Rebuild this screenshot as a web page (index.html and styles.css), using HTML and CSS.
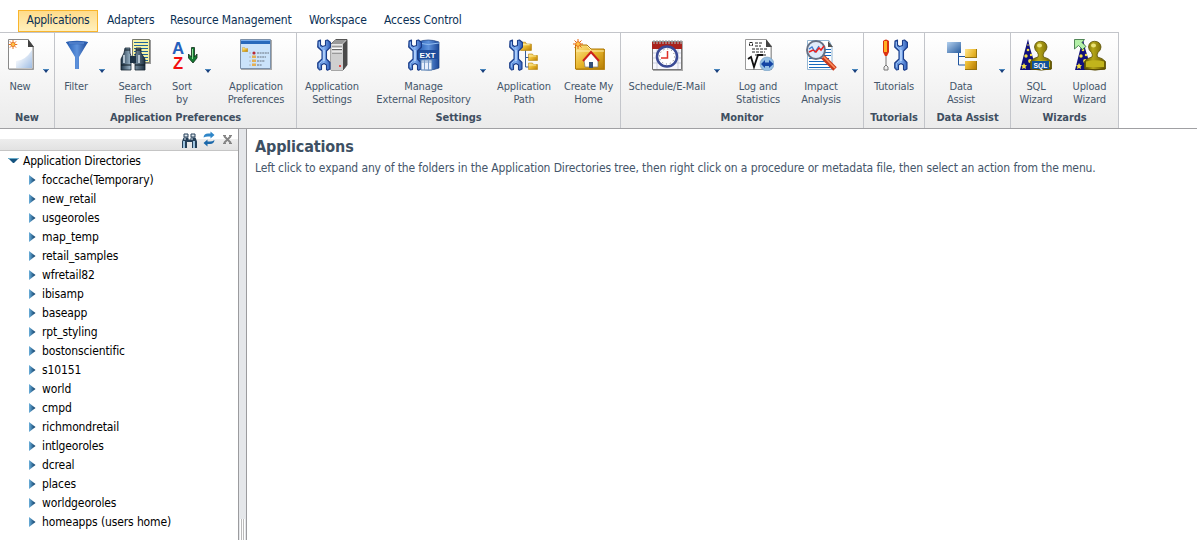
FILE: index.html
```html
<!DOCTYPE html>
<html lang="en">
<head>
<meta charset="utf-8">
<title>Applications</title>
<link rel="stylesheet" href="styles.css">
</head>
<body>
<svg class="defs" width="0" height="0">
  <defs>
    <linearGradient id="steel" x1="0" x2="1"><stop offset="0" stop-color="#3263b8"/><stop offset=".45" stop-color="#86b4f4"/><stop offset="1" stop-color="#2a58b4"/></linearGradient>
    <linearGradient id="blue" x1="0" x2="1"><stop offset="0" stop-color="#225bb2"/><stop offset=".5" stop-color="#5e92dc"/><stop offset="1" stop-color="#1c4796"/></linearGradient>
    <linearGradient id="gold" x1="0" y1="0" x2="1" y2="1"><stop offset="0" stop-color="#ffe58c"/><stop offset=".5" stop-color="#e8b62c"/><stop offset="1" stop-color="#b67d05"/></linearGradient>
    <linearGradient id="brass" x1="0" x2="1"><stop offset="0" stop-color="#5f5600"/><stop offset=".4" stop-color="#b5a618"/><stop offset="1" stop-color="#665800"/></linearGradient>
    <linearGradient id="tube" x1="0" x2="1"><stop offset="0" stop-color="#22374a"/><stop offset=".4" stop-color="#9db7ca"/><stop offset="1" stop-color="#1d3040"/></linearGradient>
    <linearGradient id="sky" x1="0" y1="0" x2="1" y2="1"><stop offset="0" stop-color="#b3d0ee"/><stop offset="1" stop-color="#285c9e"/></linearGradient>
    <linearGradient id="page" x1="0" y1="0" x2="1" y2="1"><stop offset=".2" stop-color="#fff"/><stop offset="1" stop-color="#9fbde4"/></linearGradient>
    <linearGradient id="tri" x1="0" x2="1"><stop offset="0" stop-color="#6bb0dc"/><stop offset="1" stop-color="#06345e"/></linearGradient>
    <symbol id="wrench" viewBox="0 0 14 32">
      <path d="M1 2 3.500 1V6L5.500 7.500 8.500 6.500V1.500L10.500 1l3 2.500V8L9.500 12v8l3.500 3.500V30l-2.500 1.200-1-.7V26L7 24.500 4.500 26v4.500L2.500 31 .7 29V24L5 20v-8L.7 8z" fill="url(#steel)" stroke="#1a3c88" stroke-width="1.100" stroke-linejoin="round"/>
      <path d="M7 11v11" fill="none" stroke="#c3dcff" stroke-width="1.300"/><path d="M2.300 3v4.500l3 2.500M2.300 28.500v-4l3-2.500" fill="none" stroke="#a7cbfb" stroke-width=".9"/>
    </symbol>
    <symbol id="binocs" viewBox="0 0 26 24">
      <path d="M5 1h5v5l1 3v14H1V12l3-6zM16 1h5v5l4 6v11H15V9l1-3z" fill="url(#tube)" stroke="#142331" stroke-width=".8"/>
      <path d="M10 9h6v7h-6z" fill="#1d3244"/><path d="M5 3h5M16 3h5M1 18h10M15 18h10" stroke="#0d1821" stroke-width="1.200"/>
      <path d="M4 8v8M19 8v8" stroke="#d7e5ef" stroke-width="1.500"/>
    </symbol>
    <symbol id="spark" viewBox="0 0 10 10">
      <path d="M5 0v10M0 5h10M1.500 1.500l7 7M8.500 1.500l-7 7" stroke="#e8660b" stroke-width="1"/><circle cx="5" cy="5" r="2.300" fill="#ffc54a" stroke="#e0560a" stroke-width=".7"/>
    </symbol>
    <symbol id="folder" viewBox="0 0 10 8" preserveAspectRatio="none"><path d="M.5 1h4l1 1.500h4v5h-9z" fill="url(#gold)" stroke="#b8860f" stroke-width=".6"/><path d="M1 3h7" stroke="#fff1a5" stroke-width=".8"/></symbol>
    <symbol id="hat" viewBox="0 0 15 32">
      <path d="M8 0 10 9l3 10 2 12H0l2-8 3-12z" fill="#10107c"/>
      <g fill="#f4df43"><path d="M4 24l1 2 2 .2-1.500 1.500.5 2.300-2-1-2 1 .5-2.300L1 26.200 3 26z"/><circle cx="8" cy="11" r="1.300"/><circle cx="6" cy="17" r="1.700"/><circle cx="11" cy="16" r="1.200"/><circle cx="10" cy="22" r="1.900"/><circle cx="8" cy="6" r=".8"/></g>
    </symbol>
    <symbol id="stamp" viewBox="0 0 22 30">
      <path d="M.5 21Q3 17.500 8 16.500 9 14.500 7.500 12 4.500 9.500 4.500 6.500 5 1 10.500 .8 16.500 1 17 6.500 17 9.500 14 12q-1.500 2.500-.5 4.500 5 1 8 4.500v7.500q-10 2-21 0z" fill="url(#brass)" stroke="#5b5104" stroke-width=".8"/>
      <path d="M2 21q9-2.500 18 0v5.500H2z" fill="#c1b41c"/><ellipse cx="9.500" cy="5" rx="2.500" ry="2" fill="#eae276"/><path d="M1 28.500q10 1.500 20 0" stroke="#5a4b00" fill="none"/>
    </symbol>
    <symbol id="drop" viewBox="0 0 6 4"><path d="M0 0h6L3 4z" fill="#173f7c"/><path d="M0 .5h6" stroke="#4b87bd"/></symbol>
    <symbol id="expand" viewBox="0 0 7 10"><path d="M0 0 6.500 5 0 10z" fill="url(#tri)"/></symbol>
  </defs>
</svg>

<nav class="tabs">
  <a class="tab tab-active">Applications</a><a class="tab t-adapters">Adapters</a><a class="tab t-resource">Resource Management</a><a class="tab t-workspace">Workspace</a><a class="tab t-access">Access Control</a>
</nav>

<div class="ribbon">
  <section class="group g-new">
    <div class="tools">
      <div class="tool"><svg class="icon" viewBox="0 0 32 32"><path d="M5 1h19l6 7v23H5z" fill="#aaa"/><path d="M4.500.5H24l5 7V30h-24.500z" fill="#fff" stroke="#898989"/><path d="M12 29V22q9 0 16-11v18z" fill="url(#page)"/><path d="M24 0v8h6z" fill="#444"/><use href="#spark" x="4.500" y="1" width="9" height="9"/></svg><span>New</span></div>
      <svg class="drop"><use href="#drop"/></svg>
    </div>
    <h2>New</h2>
  </section>
  <section class="group g-prefs">
    <div class="tools">
      <div class="tool"><svg class="icon" viewBox="0 0 32 32"><path d="M6 3 15 18v12h4V18l9-15z" fill="url(#blue)"/><ellipse cx="17" cy="3.500" rx="11" ry="1.800" fill="#2e61b2"/><path d="M9 4h15" stroke="#6e9ade"/></svg><span>Filter</span></div>
      <svg class="drop"><use href="#drop"/></svg>
      <div class="tool"><svg class="icon" viewBox="0 0 32 32"><path d="M14 1h18v24H14z" fill="#999"/><path d="M13.500.5h17v23h-17z" fill="#f4f2a4" stroke="#777a6e"/><path d="M15 3.500h14M15 6.500h14M15 9.500h14M15 12.500h14M15 15.500h14M15 18.500h14M15 21.500h14" stroke="#20659c"/><use href="#binocs" x="1" y="8" width="26" height="24"/></svg><span>Search<br>Files</span></div>
      <div class="tool"><svg class="icon" viewBox="0 0 32 32"><text class="letter-a" x="6" y="15" textLength="12" lengthAdjust="spacingAndGlyphs">A</text><text class="letter-z" x="7" y="30" textLength="10" lengthAdjust="spacingAndGlyphs">Z</text><path d="M25.500 8.500h3V18l2.500-3v4L27 24l-4.500-5v-4l3 3z" fill="#137b31" stroke="#122f1b" stroke-width=".8"/><path d="M26.500 10v10" stroke="#8cdc92"/></svg><span>Sort<br>by</span></div>
      <svg class="drop"><use href="#drop"/></svg>
      <div class="tool"><svg class="icon" viewBox="0 0 32 32"><path d="M1 1h31v30H1z" fill="#aaa"/><path d="M.5.5h30v29H.5z" fill="#cbe3fa" stroke="#7c91aa"/><path d="M1 1h29v4H1z" fill="#2769bb"/><path d="M1 1.500h29" stroke="#79adea"/><use href="#folder" x="2" y="8" width="6" height="5"/><g fill="#e3b055"><path d="M12 16.500h4v2.500h-4zM12 20.500h4v2.500h-4zM12 24.500h4v2.500h-4z"/></g><circle cx="14" cy="14" r="1.600" fill="#b72838"/><path d="M17 14h12M17 18h9M17 22h8M17 26h5" stroke="#68727e" stroke-dasharray="2 .6"/><path d="M9.500 14h1M9.500 18h1M9.500 22h1M9.500 26h1" stroke="#888"/></svg><span>Application<br>Preferences</span></div>
    </div>
    <h2>Application Preferences</h2>
  </section>
  <section class="group g-settings">
    <div class="tools">
      <div class="tool"><svg class="icon" viewBox="0 0 32 32"><path d="M15 5 20 .5h11V26l-4 5H15z" fill="#ccc" stroke="#555"/><path d="M27 5 31 1v25l-4 5z" fill="#4a4a4a"/><path d="M15 5h12v26H15z" fill="#cfcfcf"/><path d="M16 7h10M16 10.500h10M16 14h10" stroke="#666"/><path d="M16 6h10M16 9.500h10M16 13h10" stroke="#fff"/><path d="M15 5 20 1h10l-4 4z" fill="#999"/><circle cx="24" cy="27" r="1" fill="#ed211d"/><use href="#wrench" x="1" y="0" width="14" height="32"/></svg><span>Application<br>Settings</span></div>
      <div class="tool"><svg class="icon" viewBox="0 0 32 32"><path d="M10 3q10-4 21 0v26q-10 4-21 0z" fill="url(#blue)" stroke="#163c7f" stroke-width=".7"/><path d="M10 4q10 3 21 0" stroke="#92bdf0" fill="none"/><path d="M10 11h21v9H10z" fill="#204d9b"/><use href="#wrench" x="0" y="0" width="14" height="32"/><text class="ext" x="11.500" y="18.500" textLength="16" lengthAdjust="spacingAndGlyphs">EXT</text><path d="M13 21h11v10H13z" fill="#e6effb" stroke="#507cb2"/><path d="M16.500 21v10M20.500 21v10M13 23h11" stroke="#799cc8"/></svg><span>Manage<br>External Repository</span></div>
      <svg class="drop"><use href="#drop"/></svg>
      <div class="tool"><svg class="icon" viewBox="0 0 32 32"><path d="M17.500 11v17H22M17.500 18.500H22" fill="none" stroke="#365d9b"/><use href="#folder" x="12" y="2" width="12" height="10"/><use href="#folder" x="20" y="14" width="10" height="8"/><use href="#folder" x="20" y="23" width="10" height="8"/><use href="#wrench" x="1" y="0" width="14" height="32"/></svg><span>Application<br>Path</span></div>
      <div class="tool"><svg class="icon" viewBox="0 0 32 32"><path d="M3 8q0-2 2-2h8l4 4h15v21H3z" fill="#c39634"/><path d="M2.500 8V6H14l4 4h13v20H2.500z" fill="url(#gold)" stroke="#af7805"/><path d="M3 12h28M14 7l4 4" stroke="#fff0b0" fill="none"/><path d="m11 21 7-8 7 8v7H12z" fill="#fff" stroke="#777" stroke-width=".7"/><path d="m10 22 8-9 8 9" fill="none" stroke="#cc211c" stroke-width="2"/><path d="M16 23h4v6h-4z" fill="#344f79"/><use href="#spark" x="0" y="0" width="10" height="10"/></svg><span>Create My<br>Home</span></div>
    </div>
    <h2>Settings</h2>
  </section>
  <section class="group g-monitor">
    <div class="tools">
      <div class="tool"><svg class="icon" viewBox="0 0 32 32"><path d="M2 2h30v30H2z" fill="#aaa"/><path d="M1.500 2.500h29v28h-29z" fill="#f7f7fc" stroke="#777"/><path d="M1 3h30v7H1z" fill="#a9231d"/><path d="M3 1v4M6 1v4M9 1v4M12 1v4M15 1v4M18 1v4M21 1v4M24 1v4M27 1v4M30 1v4" stroke="#aaa" stroke-width="1.200"/><path d="M2 14h28M2 19h28M2 24h28M6 10v20M27 10v20" stroke="#b9bfd2" stroke-width=".7"/><circle cx="16" cy="17.500" r="10" fill="#fff" stroke="#3a4a95" stroke-width="2.500"/><circle cx="16" cy="17.500" r="7.500" fill="none" stroke="#777" stroke-dasharray="1 2.930"/><path d="M16.500 12v7H10" fill="none" stroke="#e03129" stroke-width="1.500"/></svg><span>Schedule/E-Mail</span></div>
      <svg class="drop"><use href="#drop"/></svg>
      <div class="tool"><svg class="icon" viewBox="0 0 32 32"><path d="M4 1h20l6 6v24H4z" fill="#aaa"/><path d="M3.500.5H24l5 7v23H3.500z" fill="#fff" stroke="#999"/><path d="M24 0v8h6z" fill="#444"/><path d="M7.500 3.500h3v3h-3zM13 4h7M13 7h6M10 10h15M10 13h13M13 16h11" fill="none" stroke="#222" stroke-dasharray="3 1"/><path d="m6 20 3-2 3 10 4-12h5" fill="none" stroke="#111" stroke-width="1.800"/><circle cx="25" cy="25" r="7" fill="#96bfe3" stroke="#7499b9" stroke-width=".6"/><path d="m19 25 4-4v2.500h4V21l4.500 4-4.500 4v-2h-4v2z" fill="#1545a4"/></svg><span>Log and<br>Statistics</span></div>
      <div class="tool"><svg class="icon" viewBox="0 0 32 32"><path d="M2.500 1.500H24l3 6v23H2.500z" fill="#fff" stroke="#94b7d4"/><path d="M23 2v6h5z" fill="#555"/><path d="M4 19.500h20M4 22.500h21M4 25.500h21M4 28.500h21M17 10.500h9M17 13.500h9M17 16.500h9" stroke="#1769bd"/><path d="m18 18 12 12" stroke="#c93a1c" stroke-width="5"/><path d="m18 17 12 12" stroke="#ff925f" stroke-width="1.500"/><circle cx="11" cy="11" r="9" fill="#dce9fa" fill-opacity=".9" stroke="#667184" stroke-width="2"/><path d="m4 10 3-2 3 5 4-6" fill="none" stroke="#397bd2" stroke-width="1.300"/><path d="m4 13 4-2 3 2 3-4 2 2 3-4" fill="none" stroke="#ed211d" stroke-width="1.500"/></svg><span>Impact<br>Analysis</span></div>
      <svg class="drop"><use href="#drop"/></svg>
    </div>
    <h2>Monitor</h2>
  </section>
  <section class="group g-tutorials">
    <div class="tools"><div class="tool"><svg class="icon" viewBox="0 0 32 32"><path d="M5 2q3-3 6 0v11l-2 4H7l-2-4z" fill="#dc3211"/><path d="M6 2h3v11H6z" fill="#ffb123"/><path d="M8 17v9l-2 2v3h4v-3l-2-2" fill="#eee" stroke="#777"/><use href="#wrench" x="16" y="0" width="14" height="32"/></svg><span>Tutorials</span></div></div>
    <h2>Tutorials</h2>
  </section>
  <section class="group g-data">
    <div class="tools">
      <div class="tool"><svg class="icon" viewBox="0 0 32 32"><path d="M13.500 13v13H20M13.500 17.500H20" fill="none" stroke="#2156a0"/><path d="M2 3h14v11H2z" fill="url(#sky)"/><path d="M20 10h12v9H20zM20 22h12v9H20z" fill="#9a7610"/><path d="M20 10h11v8H20zM20 22h11v8H20z" fill="url(#gold)"/></svg><span>Data<br>Assist</span></div>
      <svg class="drop"><use href="#drop"/></svg>
    </div>
    <h2>Data Assist</h2>
  </section>
  <section class="group g-wizards">
    <div class="tools">
      <div class="tool"><svg class="icon" viewBox="0 0 32 32"><use href="#hat" x="0" y="0" width="15" height="32"/><use href="#stamp" x="10" y="1" width="22" height="31"/><path d="M12 22h17v8H12z" fill="#11529b"/><text class="sql" x="13.500" y="29" textLength="14" lengthAdjust="spacingAndGlyphs">SQL</text></svg><span>SQL<br>Wizard</span></div>
      <div class="tool"><svg class="icon" viewBox="0 0 32 32"><use href="#hat" x="1" y="0" width="15" height="32"/><use href="#stamp" x="10" y="1" width="22" height="31"/><path d="M.5.5h10L8 3.500l4 4-3.500 3-4-4-4 3.500z" fill="#b4f0a8" stroke="#306b37" stroke-width=".8"/></svg><span>Upload<br>Wizard</span></div>
    </div>
    <h2>Wizards</h2>
  </section>
</div>

<div class="workspace">
  <aside class="sidebar">
    <div class="sidebar-tools">
      <svg width="15" height="15" viewBox="0 0 15 15"><path d="M2 1h4v3H2zM9 1h4v3H9z" fill="#dfe8ee" stroke="#26415a"/><path d="M1.500 4.500h5v2h2v-2h5l1.500 4V15h-5V9h-5v6H0V8.500z" fill="#243f58"/><path d="M2 8v7M12 8v7" stroke="#9fc4df" stroke-width="2"/><path d="M3 5v2M10 5v2" stroke="#d7e5ef"/></svg>
      <svg class="refresh" width="12" height="16" viewBox="0 0 12 16"><path d="M.5 6.500Q1 2.500 5 2.500h2.500V.5L11.500 4 7.500 7.500v-2H5Q2.500 5.500.5 6.500z" fill="#2f86c8"/><path d="M11.500 9q-.5 4-4.500 4H4.500v2.500L.5 12l4-3.500v2H7q2.500 0 4.500-1.500z" fill="#1b68aa"/></svg>
      <svg class="close" width="9" height="9" viewBox="0 0 9 9"><path d="m1 1 7 7M8 1 1 8" stroke="#838383" stroke-width="1.800"/><path d="M0 .5h3M6 .5h3M0 8.500h3M6 8.500h3" stroke="#838383"/></svg>
    </div>
    <div class="root"><svg width="11" height="5" viewBox="0 0 11 5"><path d="M0 0h11L6 5H5z" fill="#15537f"/><path d="M0 .5h10" stroke="#67abc9"/></svg><span>Application Directories</span></div>
    <ul class="tree">
      <li><svg><use href="#expand"/></svg><span>foccache(Temporary)</span></li>
      <li><svg><use href="#expand"/></svg><span>new_retail</span></li>
      <li><svg><use href="#expand"/></svg><span>usgeoroles</span></li>
      <li><svg><use href="#expand"/></svg><span>map_temp</span></li>
      <li><svg><use href="#expand"/></svg><span>retail_samples</span></li>
      <li><svg><use href="#expand"/></svg><span>wfretail82</span></li>
      <li><svg><use href="#expand"/></svg><span>ibisamp</span></li>
      <li><svg><use href="#expand"/></svg><span>baseapp</span></li>
      <li><svg><use href="#expand"/></svg><span>rpt_styling</span></li>
      <li><svg><use href="#expand"/></svg><span>bostonscientific</span></li>
      <li><svg><use href="#expand"/></svg><span>s10151</span></li>
      <li><svg><use href="#expand"/></svg><span>world</span></li>
      <li><svg><use href="#expand"/></svg><span>cmpd</span></li>
      <li><svg><use href="#expand"/></svg><span>richmondretail</span></li>
      <li><svg><use href="#expand"/></svg><span>intlgeoroles</span></li>
      <li><svg><use href="#expand"/></svg><span>dcreal</span></li>
      <li><svg><use href="#expand"/></svg><span>places</span></li>
      <li><svg><use href="#expand"/></svg><span>worldgeoroles</span></li>
      <li><svg><use href="#expand"/></svg><span>homeapps (users home)</span></li>
    </ul>
  </aside>
  <div class="splitter"><div class="grip"></div></div>
  <main class="content">
    <h1>Applications</h1>
    <p>Left click to expand any of the folders in the Application Directories tree, then right click on a procedure or metadata file, then select an action from the menu.</p>
  </main>
</div>
</body>
</html>
```
FILE: styles.css
```css
* { box-sizing: border-box; }
body { margin: 0; width: 1197px; height: 540px; overflow: hidden; background: #fff; font-family: "DejaVu Sans Condensed", "DejaVu Sans", sans-serif; font-stretch: condensed; font-size: 12px; letter-spacing: -0.12px; color: #000; display: flex; flex-direction: column; }
h1, h2, p, ul { margin: 0; padding: 0; }
.defs { display: block; flex: none; height: 0; }
.tabs { display: flex; height: 32px; padding: 10px 0 0 18px; flex: none; color: #0a3055; }
.tab { height: 22px; line-height: 20px; white-space: nowrap; flex: none; }
.tab-active { width: 80px; line-height: 19px; text-align: center; letter-spacing: -0.25px; border: 1px solid #f9b52c; background: linear-gradient(#ffdb8a, #fff0bd); }
.t-adapters { margin-left: 9px; width: 63px; }
.t-resource { width: 139px; }
.t-workspace { width: 75px; }
.ribbon { height: 97px; flex: none; display: flex; border-bottom: 1px solid #a0a0a3; }
.group { flex: none; border-top: 1px solid #c3c5ca; border-right: 1px solid #c3c5ca; background: linear-gradient(#fff, #ebebeb); display: flex; flex-direction: column; color: #45566a; }
.g-new { width: 55px; }
.g-prefs { width: 242px; }
.g-settings { width: 324px; }
.g-monitor { width: 243px; }
.g-tutorials { width: 61px; }
.g-data { width: 86px; }
.g-wizards { width: 108px; }
.tools { display: grid; height: 76px; padding-top: 6px; }
.g-new .tools { grid-template-columns: 40px 12px; }
.g-prefs .tools { grid-template-columns: 42px 10px 56px 38px 14px 82px; }
.g-settings .tools { grid-template-columns: 70px 113px 6px 76px 53px; }
.g-monitor .tools { grid-template-columns: 92px 8px 74px 52px 16px; }
.g-tutorials .tools { grid-template-columns: 60px; }
.g-data .tools { grid-template-columns: 72px 10px; }
.g-wizards .tools { grid-template-columns: 50px 57px; }
.tool { display: flex; flex-direction: column; align-items: center; font-size: 11px; letter-spacing: -0.13px; line-height: 13px; text-align: center; white-space: nowrap; gap: 9px; }
.icon { width: 32px; height: 32px; flex: none; }
.drop { width: 6px; height: 4px; margin-top: 30px; justify-self: center; }
.group h2 { font-size: 11px; line-height: 20px; text-align: center; color: #3f4f61; letter-spacing: -0.1px; white-space: nowrap; }
.letter-a { font: bold 16px "Liberation Sans", sans-serif; fill: #2560bc; }
.letter-z { font: bold 16px "Liberation Sans", sans-serif; fill: #f20d0d; }
.ext { font: bold 8px "Liberation Sans", sans-serif; fill: #fff; letter-spacing: 0; }
.sql { font: bold 8px "Liberation Sans", sans-serif; fill: #fff; letter-spacing: 0; }
.workspace { flex: 1; display: flex; min-height: 0; }
.sidebar { width: 238px; flex: none; }
.sidebar-tools { height: 22px; display: flex; align-items: flex-start; justify-content: flex-end; gap: 6px; padding: 4px 6px 0 0; border-bottom: 1px solid #c5c5c5; background: linear-gradient(#fff 0, #fff 10px, #ededed 10px, #e2e2e2 100%); }
.refresh { margin-top: -2px; }
.close { margin: 2px 0 0 2px; }
.root { display: flex; height: 19px; align-items: center; padding-left: 8px; gap: 4px; white-space: nowrap; letter-spacing: -0.2px; }
.tree { list-style: none; }
.tree li { height: 19px; display: flex; align-items: center; padding-left: 29px; gap: 6px; white-space: nowrap; }
.tree svg { width: 7px; height: 10px; flex: none; }
.splitter { width: 9px; flex: none; background: #e5e7ea; border-left: 1px solid #9b9b9e; border-right: 1px solid #9b9b9e; display: flex; align-items: flex-end; padding: 0 1px; }
.grip { width: 5px; height: 21px; background: repeating-linear-gradient(90deg, #fff 0, #fff 1px, #bbb 1px, #bbb 2px); }
.content { flex: 1; padding: 8px 0 0 8px; color: #45566a; white-space: nowrap; }
.content h1 { font-size: 16px; line-height: 20px; letter-spacing: -0.15px; color: #3d5063; }
.content p { line-height: 22px; }
```
